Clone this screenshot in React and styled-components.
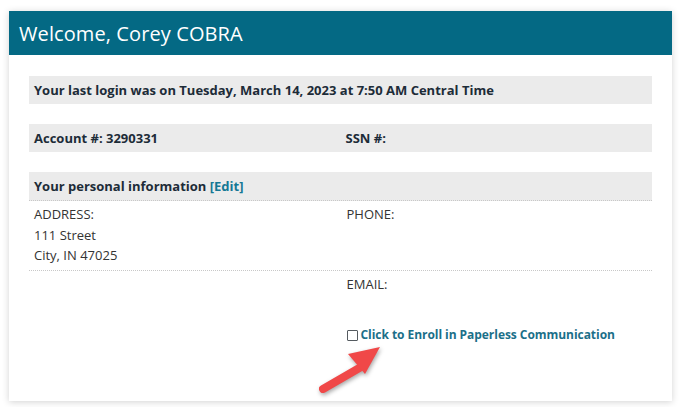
import React from "react";
import styled, { createGlobalStyle } from "styled-components";

const GlobalStyle = createGlobalStyle`
  html, body {
    margin: 0;
    padding: 0;
    background: #ffffff;
    font-family: "Open Sans", "Liberation Sans", sans-serif;
  }
`;

const Page = styled.div`
  padding: 11px 10px 9px 9px;
`;

const Card = styled.section`
  position: relative;
  background: #ffffff;
  box-shadow: 0 1px 7px rgba(0, 0, 0, 0.18);
`;

const Header = styled.header`
  height: 44px;
  background: #046984;
  display: flex;
  align-items: center;
  padding-left: 10px;
`;

const Title = styled.h1`
  margin: 0;
  font-size: 20px;
  font-weight: 400;
  color: #ffffff;
  letter-spacing: 0.1px;
`;

const Body = styled.div`
  padding: 21px 20px 51px 20px;
  display: flex;
  flex-direction: column;
`;

const Bar = styled.div`
  height: 28px;
  background: #ebebeb;
  display: grid;
  grid-template-columns: ${(p) => (p.$split ? "1fr 1fr" : "1fr")};
  align-items: center;
  margin-bottom: ${(p) => (p.$last ? "0" : "20px")};
  border-bottom: ${(p) => (p.$dotted ? "1px dotted #c8c8c8" : "none")};
`;

const BarText = styled.span`
  padding-left: 5px;
  font-size: 13px;
  font-weight: 700;
  color: #1d2c38;
`;

const EditLink = styled.a`
  color: #157895;
  text-decoration: none;
  cursor: pointer;
`;

const InfoRow = styled.div`
  display: grid;
  grid-template-columns: 1fr 1fr;
  border-bottom: ${(p) => (p.$dotted ? "1px dotted #c8c8c8" : "none")};
  padding: 3px 0 4px;
`;

const Cell = styled.div`
  padding-left: ${(p) => (p.$right ? "6px" : "5px")};
  font-size: 13px;
  line-height: 20.5px;
  color: #333333;
`;

const Line = styled.div``;

const EnrollLink = styled.a`
  display: flex;
  align-items: center;
  gap: 3px;
  margin-top: 31px;
  font-size: 12px;
  letter-spacing: -0.05px;
  font-weight: 700;
  color: #1b6f89;
  text-decoration: none;
  cursor: pointer;
`;

const Box = styled.span`
  width: 9px;
  height: 9px;
  border: 1px solid #555b60;
  border-radius: 1px;
  background: #ffffff;
`;

const Arrow = styled.svg`
  position: absolute;
  left: 308px;
  top: 327px;
  filter: drop-shadow(1px 2px 2px rgba(0, 0, 0, 0.35));
`;

export default function App() {
  return (
    <>
      <GlobalStyle />
      <Page>
        <Card>
          <Header>
            <Title>Welcome, Corey COBRA</Title>
          </Header>
          <Body>
            <Bar>
              <BarText>
                Your last login was on Tuesday, March 14, 2023 at 7:50 AM Central Time
              </BarText>
            </Bar>
            <Bar $split>
              <BarText>Account #: 3290331</BarText>
              <BarText>SSN #:</BarText>
            </Bar>
            <Bar $last $dotted>
              <BarText>
                Your personal information <EditLink>[Edit]</EditLink>
              </BarText>
            </Bar>
            <InfoRow $dotted>
              <Cell>
                <Line>ADDRESS:</Line>
                <Line>111 Street</Line>
                <Line>City, IN 47025</Line>
              </Cell>
              <Cell $right>
                <Line>PHONE:</Line>
              </Cell>
            </InfoRow>
            <InfoRow>
              <Cell />
              <Cell $right>
                <Line>EMAIL:</Line>
                <EnrollLink>
                  <Box />
                  Click to Enroll in Paperless Communication
                </EnrollLink>
              </Cell>
            </InfoRow>
          </Body>
          <Arrow width="80" height="70" viewBox="0 0 80 70">
            <line
              x1="6"
              y1="51"
              x2="44"
              y2="29"
              stroke="#f04848"
              strokeWidth="8"
              strokeLinecap="round"
            />
            <polygon points="31,16 63,9 48,36" fill="#f04848" />
          </Arrow>
        </Card>
      </Page>
    </>
  );
}
